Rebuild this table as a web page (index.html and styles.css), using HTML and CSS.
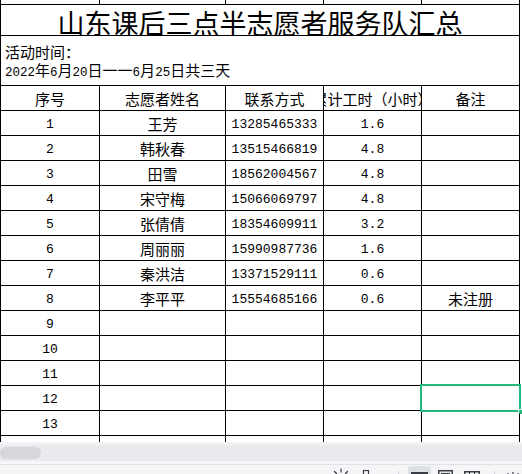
FILE: index.html
```html
<!DOCTYPE html>
<html lang="zh-CN">
<head>
<meta charset="utf-8">
<title>山东课后三点半志愿者服务队汇总</title>
<link rel="stylesheet" href="styles.css">
</head>
<body>
<div class="sheet">
  <div class="grid">
    <div class="c"></div><div class="c"></div><div class="c"></div><div class="c"></div><div class="c"></div>
    <div class="c title">山东课后三点半志愿者服务队汇总</div>
    <div class="c activity">
      <div class="line">活动时间：</div>
      <div class="line"><span class="d">2022</span>年<span class="d">6</span>月<span class="d">20</span>日一一<span class="d">6</span>月<span class="d">25</span>日共三天</div>
    </div>
    <div class="c">序号</div><div class="c">志愿者姓名</div><div class="c">联系方式</div><div class="c">累计工时（小时）</div><div class="c">备注</div>

    <div class="c"><span class="n">1</span></div><div class="c">王芳</div><div class="c"><span class="n">13285465333</span></div><div class="c"><span class="n">1.6</span></div><div class="c"></div>
    <div class="c"><span class="n">2</span></div><div class="c">韩秋春</div><div class="c"><span class="n">13515466819</span></div><div class="c"><span class="n">4.8</span></div><div class="c"></div>
    <div class="c"><span class="n">3</span></div><div class="c">田雪</div><div class="c"><span class="n">18562004567</span></div><div class="c"><span class="n">4.8</span></div><div class="c"></div>
    <div class="c"><span class="n">4</span></div><div class="c">宋守梅</div><div class="c"><span class="n">15066069797</span></div><div class="c"><span class="n">4.8</span></div><div class="c"></div>
    <div class="c"><span class="n">5</span></div><div class="c">张倩倩</div><div class="c"><span class="n">18354609911</span></div><div class="c"><span class="n">3.2</span></div><div class="c"></div>
    <div class="c"><span class="n">6</span></div><div class="c">周丽丽</div><div class="c"><span class="n">15990987736</span></div><div class="c"><span class="n">1.6</span></div><div class="c"></div>
    <div class="c"><span class="n">7</span></div><div class="c">秦洪洁</div><div class="c"><span class="n">13371529111</span></div><div class="c"><span class="n">0.6</span></div><div class="c"></div>
    <div class="c"><span class="n">8</span></div><div class="c">李平平</div><div class="c"><span class="n">15554685166</span></div><div class="c"><span class="n">0.6</span></div><div class="c">未注册</div>
    <div class="c"><span class="n">9</span></div><div class="c"></div><div class="c"></div><div class="c"></div><div class="c"></div>
    <div class="c"><span class="n">10</span></div><div class="c"></div><div class="c"></div><div class="c"></div><div class="c"></div>
    <div class="c"><span class="n">11</span></div><div class="c"></div><div class="c"></div><div class="c"></div><div class="c"></div>
    <div class="c"><span class="n">12</span></div><div class="c"></div><div class="c"></div><div class="c"></div><div class="c sel"><div class="selbox"><i class="handle"></i></div></div>
    <div class="c"><span class="n">13</span></div><div class="c"></div><div class="c"></div><div class="c"></div><div class="c"></div>
    <div class="c"></div><div class="c"></div><div class="c"></div><div class="c"></div><div class="c"></div>
  </div>
</div>
<div class="hscroll"><div class="thumb"></div></div>
<div class="divider"></div>
<div class="status">
  <svg class="st-sun" width="16" height="14" viewBox="0 0 16 14"><g stroke="#3a3d44" stroke-width="1.2" fill="none" stroke-linecap="round"><line x1="8" y1="1" x2="8" y2="4"/><line x1="1.5" y1="3.5" x2="3.5" y2="5.5"/><line x1="14.5" y1="3.5" x2="12.5" y2="5.5"/><circle cx="8" cy="10" r="3"/></g></svg>
  <svg class="st-lock" width="8" height="12" viewBox="0 0 8 12"><rect x="1.5" y="0.5" width="5" height="10" fill="none" stroke="#3a3d44" stroke-width="1.2"/></svg>
  <span class="st-sep"></span>
  <span class="st-btn"><svg width="17" height="12" viewBox="0 0 17 12"><rect x="0.75" y="0.75" width="15.5" height="10" fill="none" stroke="#3a3d44" stroke-width="1.5"/><rect x="0" y="0" width="17" height="2.5" fill="#3a3d44"/><line x1="6" y1="1" x2="6" y2="11" stroke="#3a3d44"/><line x1="11" y1="1" x2="11" y2="11" stroke="#3a3d44"/></svg></span>
  <svg class="st-page" width="15" height="14" viewBox="0 0 15 14"><rect x="0.75" y="0.75" width="13.5" height="12" fill="none" stroke="#3a3d44" stroke-width="1.5"/><rect x="3.5" y="3.5" width="8" height="8" fill="none" stroke="#3a3d44" stroke-width="1.2"/></svg>
  <svg class="st-break" width="16" height="13" viewBox="0 0 16 13"><rect x="0.75" y="0.75" width="14.5" height="11" fill="none" stroke="#3a3d44" stroke-width="1.5"/><line x1="5.5" y1="1" x2="5.5" y2="12" stroke="#3a3d44" stroke-width="1.2"/><line x1="10.5" y1="1" x2="10.5" y2="12" stroke="#3a3d44" stroke-width="1.2"/></svg>
  <span class="st-sep st-sep2"></span>
  <svg class="st-zoom" width="16" height="12" viewBox="0 0 16 12"><g stroke="#3a3d44" stroke-width="1.2" fill="none"><line x1="3" y1="2" x2="3" y2="6"/><line x1="8" y1="1" x2="8" y2="5"/><line x1="13" y1="2" x2="13" y2="6"/></g></svg>
</div>
</body>
</html>
```

FILE: styles.css
```css
html, body {
  margin: 0;
  padding: 0;
}

body {
  width: 522px;
  height: 474px;
  overflow: hidden;
  background: #ffffff;
  color: #000000;
  font-family: "Noto Sans CJK SC", "Noto Sans", sans-serif;
}

.sheet {
  height: 442px;
  overflow: hidden;
}

.grid {
  display: grid;
  box-sizing: border-box;
  width: 520px;
  padding: 0 1px;
  gap: 1px;
  background: #000000;
  grid-template-columns: 98px 125px 97px 97px 97px;
  grid-template-rows: 4px 30px 49px 24px;
  grid-auto-rows: 24px;
}

.c {
  background: #ffffff;
  display: flex;
  align-items: center;
  justify-content: center;
  overflow: hidden;
  white-space: nowrap;
  font-size: 15px;
  line-height: 1;
}

.n {
  font-family: "Liberation Mono", "DejaVu Sans Mono", monospace;
  font-size: 13px;
  padding-top: 3px;
}

.title {
  grid-column: 1 / -1;
  font-size: 27px;
  padding-top: 4px;
  box-sizing: border-box;
  overflow: visible;
}

.activity {
  grid-column: 1 / -1;
  flex-direction: column;
  align-items: flex-start;
  justify-content: flex-start;
  box-sizing: border-box;
  padding: 7px 0 0 4px;
  overflow: visible;
}

.activity .line {
  height: 18px;
  line-height: 18px;
  font-size: 15px;
}

.d {
  font-family: "Liberation Mono", "DejaVu Sans Mono", monospace;
  font-size: 12.5px;
}

.sel {
  position: relative;
  overflow: visible;
}

.selbox {
  position: absolute;
  left: -2px;
  right: -2px;
  top: -2px;
  bottom: -2px;
  border: 2px solid #21b97b;
}

.handle {
  position: absolute;
  right: -4px;
  bottom: -4px;
  width: 4px;
  height: 4px;
  background: #21b97b;
  border-left: 1px solid #ffffff;
  border-top: 1px solid #ffffff;
}

.hscroll {
  box-sizing: border-box;
  height: 19px;
  background: #e9eaee;
  border-top: 3px solid #f2f3f5;
  padding-top: 2px;
}

.thumb {
  width: 41px;
  height: 12px;
  border-radius: 6px;
  background: #d5d7dd;
}

.divider {
  height: 3px;
  background: #f6f7f8;
  border-bottom: 1px solid #e1e2e6;
}

.status {
  height: 9px;
  overflow: hidden;
  background: #f4f5f7;
  display: flex;
  align-items: flex-start;
}

.status svg {
  flex: none;
  display: block;
}

.st-sun {
  margin-left: 333px;
  margin-top: 3px;
}

.st-lock {
  margin-left: 13px;
  margin-top: 5px;
}

.st-sep {
  flex: none;
  width: 1px;
  height: 12px;
  margin-left: 28px;
  margin-top: 6px;
  background: #d3d5da;
}

.st-btn {
  flex: none;
  width: 23px;
  height: 14px;
  margin-left: 9px;
  margin-top: 1px;
  border-radius: 3px;
  background: #dcdfe4;
  display: flex;
  justify-content: center;
  padding-top: 6px;
  box-sizing: border-box;
}

.st-page {
  margin-left: 7px;
  margin-top: 5px;
}

.st-break {
  margin-left: 11px;
  margin-top: 6px;
}

.st-sep2 {
  margin-left: 14px;
}

.st-zoom {
  margin-left: 10px;
  margin-top: 6px;
}
```
